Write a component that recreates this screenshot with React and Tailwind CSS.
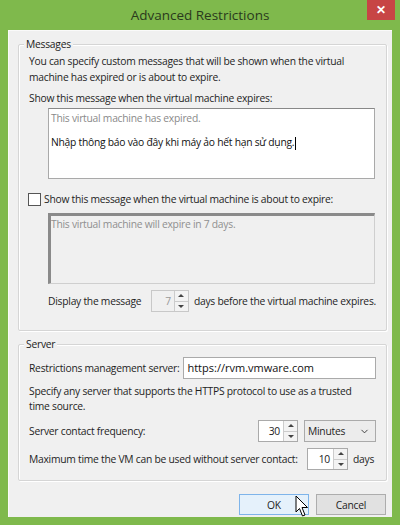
import { ChevronDown } from 'lucide-react';

function Spinner({ value, disabled, className = '' }) {
  return (
    <div className={`flex h-[22px] border ${disabled ? 'border-[#c8c8c8] bg-[#f0f0f0]' : 'border-[#aaa] bg-white'} ${className}`}>
      <div className={`flex-1 flex items-center justify-end pr-[3px] ${disabled ? 'text-[#999]' : 'text-[#222]'}`}>{value}</div>
      <div className="w-[14px] flex flex-col border-l border-[#ccc]">
        <div className="flex-1 flex items-center justify-center bg-[#f3f3f3] border-b border-[#ccc]">
          <span className="block w-0 h-0 border-l-[3px] border-r-[3px] border-b-[3px] border-l-transparent border-r-transparent border-b-[#444]" />
        </div>
        <div className="flex-1 flex items-center justify-center bg-[#f3f3f3]">
          <span className="block w-0 h-0 border-l-[3px] border-r-[3px] border-t-[3px] border-l-transparent border-r-transparent border-t-[#444]" />
        </div>
      </div>
    </div>
  );
}

function Group({ label, className = '', children }) {
  return (
    <div className={`relative border border-[#d5d5d5] rounded-[2px] shadow-[inset_1px_1px_0_#fff,1px_1px_0_#fff] ${className}`}>
      <span className="absolute left-[5px] -top-[9px] px-[2px] bg-[#f0f0f0] text-[#222]">{label}</span>
      {children}
    </div>
  );
}

export default function App() {
  return (
    <div className="w-[400px] h-[525px] bg-[#7fb94c] flex flex-col text-[10.3px] tracking-[-0.25px] leading-[16px] text-[#1e1e1e] whitespace-nowrap" style={{ fontFamily: '"Open Sans", "Noto Sans", sans-serif' }}>
      <div className="h-[30px] shrink-0 relative flex items-center justify-center">
        <span className="text-[13.5px] tracking-normal text-[#2a3a1c]">Advanced Restrictions</span>
        <div className="absolute right-[5px] top-0 w-[28px] h-[20px] bg-[#c74545] flex items-center justify-center text-white text-[12px] font-bold leading-none">✕</div>
      </div>
      <div className="flex-1 mx-[8px] mb-[8px] bg-[#f0f0f0] border-t border-l border-[#fafafa] pl-[9px] pr-[5px] pt-[13px]">
        <Group label="Messages" className="h-[287px] pl-[10px] pr-[10px] pt-[8px]">
          <p>You can specify custom messages that will be shown when the virtual<br />machine has expired or is about to expire.</p>
          <p className="mt-[5px]">Show this message when the virtual machine expires:</p>
          <div className="mt-[2px] ml-[19px] mr-[1px] h-[71px] bg-white border border-[#a9a9a9] border-t-[#888] px-[2px] pt-[1px]">
            <div className="text-[#8a8a8a]">This virtual machine has expired.</div>
            <div className="mt-[8px] text-[#111]">Nhập thông báo vào đây khi máy ảo hết hạn sử dụng.<span className="inline-block w-px h-[13px] bg-black align-middle ml-[1px]" /></div>
          </div>
          <div className="mt-[12px] flex items-center -ml-[1px]">
            <span className="w-[13px] h-[13px] border border-[#555] bg-white" />
            <span className="ml-[3px]">Show this message when the virtual machine is about to expire:</span>
          </div>
          <div className="mt-[6px] ml-[19px] mr-[1px] h-[71px] bg-[#f0f0f0] border border-[#cfcfcf] border-t-[3px] border-l-[3px] border-t-[#8a8a8a] border-l-[#8a8a8a] text-[#8f8f8f]">
            This virtual machine will expire in 7 days.
          </div>
          <div className="mt-[6px] ml-[19px] flex items-center">
            <span>Display the message</span>
            <Spinner value="7" disabled className="ml-[10px] w-[40px]" />
            <span className="ml-[5px]">days before the virtual machine expires.</span>
          </div>
        </Group>
        <Group label="Server" className="mt-[13px] h-[137px] pl-[10px] pr-[10px] pt-[12px]">
          <div className="flex items-center">
            <span>Restrictions management server:</span>
            <div className="ml-[4px] flex-1 h-[22px] bg-white border border-[#aaa] flex items-center px-[3px] text-[11px] tracking-normal text-[#111]">https://rvm.vmware.com</div>
          </div>
          <p className="mt-[5px] leading-[15px]">Specify any server that supports the HTTPS protocol to use as a trusted<br />time source.</p>
          <div className="mt-[6px] flex items-center">
            <span className="flex-1">Server contact frequency:</span>
            <Spinner value="30" className="w-[40px]" />
            <div className="ml-[6px] w-[72px] h-[22px] border border-[#aaa] bg-[#ececec] flex items-center justify-between px-[3px]">
              <span>Minutes</span>
              <ChevronDown size={11} strokeWidth={2} className="text-[#333] mr-[2px]" />
            </div>
          </div>
          <div className="mt-[6px] flex items-center">
            <span className="flex-1">Maximum time the VM can be used without server contact:</span>
            <Spinner value="10" className="w-[41px]" />
            <span className="ml-[5px] w-[23px]">days</span>
          </div>
        </Group>
        <div className="mt-[13px] flex justify-end gap-[7px] pr-[1px]">
          <div className="relative w-[70px] h-[21px] border border-[#7eb4ea] bg-[#e5f1fb] flex items-center justify-center">
            OK
            <svg className="absolute left-[55px] top-[0px]" width="14" height="24" viewBox="0 0 14 24">
              <path d="M1 1 L1 17 L4.5 13.5 L7.5 21 L10 20 L7 12.5 L12.5 12.5 Z" fill="#fff" stroke="#000" strokeWidth="1" strokeLinejoin="round" />
            </svg>
          </div>
          <div className="w-[70px] h-[21px] border border-[#adadad] bg-[#e1e1e1] flex items-center justify-center">Cancel</div>
        </div>
      </div>
    </div>
  );
}
